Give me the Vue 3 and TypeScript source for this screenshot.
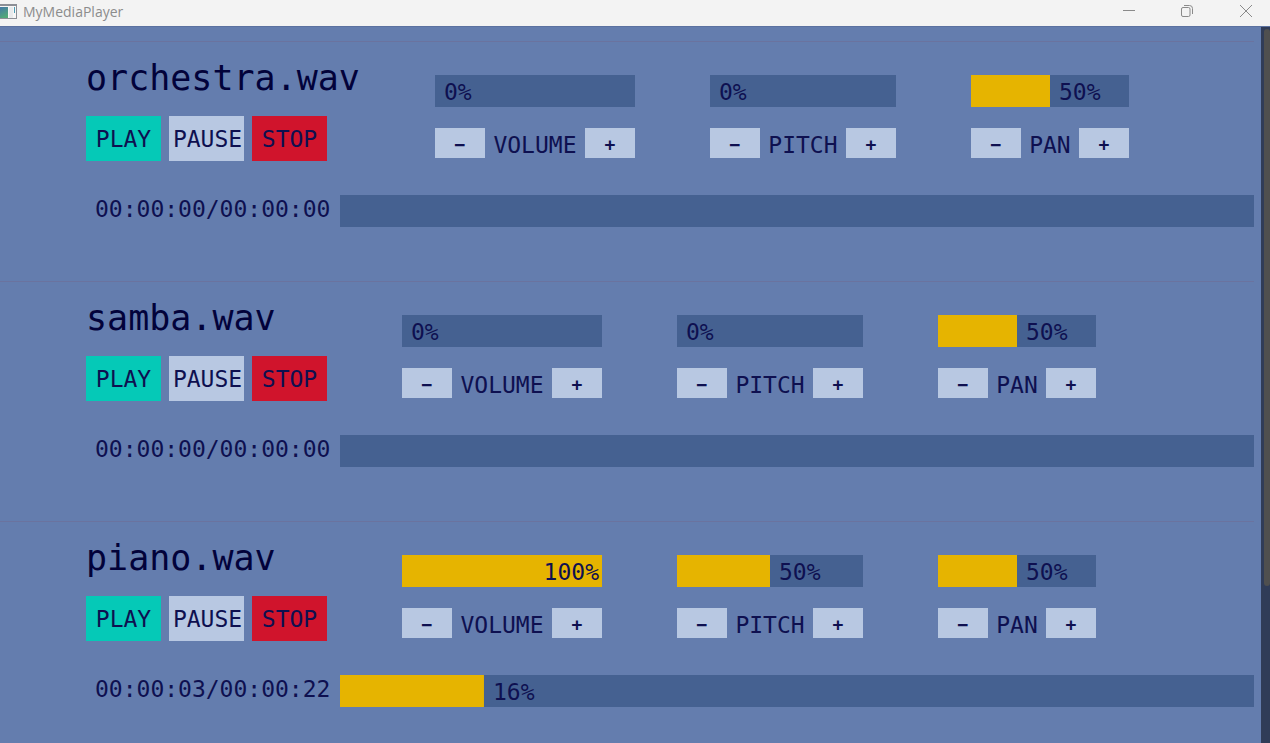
<script setup lang="ts">
import { reactive } from 'vue'

type ControlName = 'volume' | 'pitch' | 'pan'

interface Track {
  file: string
  position: string
  length: string
  progress: number
  levels: Record<ControlName, number>
}

const controls: ControlName[] = ['volume', 'pitch', 'pan']

const tracks = reactive<Track[]>([
  { file: 'orchestra.wav', position: '00:00:00', length: '00:00:00', progress: 0, levels: { volume: 0, pitch: 0, pan: 50 } },
  { file: 'samba.wav', position: '00:00:00', length: '00:00:00', progress: 0, levels: { volume: 0, pitch: 0, pan: 50 } },
  { file: 'piano.wav', position: '00:00:03', length: '00:00:22', progress: 15.75, levels: { volume: 100, pitch: 50, pan: 50 } },
])

function step(track: Track, name: ControlName, amount: number) {
  track.levels[name] = Math.min(100, Math.max(0, track.levels[name] + amount))
}
</script>

<template>
  <div class="window">
    <header class="titlebar">
      <svg class="app-icon" width="18" height="17" viewBox="0 0 18 17" aria-hidden="true">
        <defs>
          <linearGradient id="icon-fill" x1="0" y1="0" x2="0.4" y2="1">
            <stop offset="0" stop-color="#4478a8" />
            <stop offset="1" stop-color="#50a878" />
          </linearGradient>
        </defs>
        <rect x="-1" y="1" width="18" height="15" fill="#8c8f96" />
        <rect x="0" y="3" width="16" height="12" fill="#f6f6f6" />
        <rect x="0" y="4" width="8" height="11" fill="url(#icon-fill)" />
        <rect x="9" y="4" width="4" height="11" fill="#e8eaec" />
        <rect x="14" y="4" width="1" height="6" fill="#4c9cb4" />
      </svg>
      <span class="app-name">MyMediaPlayer</span>
      <div class="window-buttons">
        <button type="button" aria-label="Minimize">
          <svg width="14" height="14" viewBox="0 0 14 14"><path d="M1 6.5H13" /></svg>
        </button>
        <button type="button" aria-label="Restore">
          <svg width="14" height="14" viewBox="0 0 14 14">
            <rect x="1.5" y="3.5" width="8.5" height="9" rx="1.5" />
            <path d="M4 1.5H9.5Q12.500 1.500 12.500 4.500V10" />
          </svg>
        </button>
        <button type="button" aria-label="Close">
          <svg width="14" height="14" viewBox="0 0 14 14"><path d="M1 1L13 13M13 1L1 13" /></svg>
        </button>
      </div>
    </header>

    <div class="body">
      <main class="tracks">
        <section v-for="track in tracks" :key="track.file" class="track">
          <div class="top">
            <div class="transport">
              <h2>{{ track.file }}</h2>
              <div class="buttons">
                <button type="button" class="play">PLAY</button>
                <button type="button" class="pause">PAUSE</button>
                <button type="button" class="stop">STOP</button>
              </div>
            </div>
            <div v-for="name in controls" :key="name" class="control" :class="name">
              <div class="bar" role="progressbar" :aria-label="name" :aria-valuenow="track.levels[name]" :style="{ '--level': track.levels[name] + '%' }">
                <div class="spacer"></div>
                <span class="value">{{ track.levels[name] }}%</span>
              </div>
              <div class="stepper">
                <button type="button" :aria-label="name + ' down'" @click="step(track, name, -10)">−</button>
                <span class="label">{{ name.toUpperCase() }}</span>
                <button type="button" :aria-label="name + ' up'" @click="step(track, name, 10)">+</button>
              </div>
            </div>
          </div>
          <div class="timeline">
            <span class="time">{{ track.position }}/{{ track.length }}</span>
            <div class="bar" role="progressbar" aria-label="position" :aria-valuenow="track.progress" :style="{ '--level': track.progress + '%' }">
              <div class="spacer"></div>
              <span v-if="track.progress > 0" class="value">{{ Math.round(track.progress) }}%</span>
            </div>
          </div>
        </section>
      </main>
      <div class="scrollbar"><div class="thumb"></div></div>
    </div>
  </div>
</template>

<style>
body {
  margin: 0;
}
</style>

<style scoped>
.window {
  display: flex;
  flex-direction: column;
  height: 100vh;
  overflow: hidden;
  background: #647dae;
  color: #0e1050;
  font: 23px/30px "DejaVu Sans Mono", monospace;
}

button {
  box-sizing: border-box;
  margin: 0;
  padding: 0;
  border: 0;
  color: inherit;
  font: inherit;
}

.titlebar {
  flex: none;
  display: flex;
  align-items: center;
  height: 26px;
  background: #f3f3f3;
  color: #8c8c8c;
  font: 14px/24px "Open Sans", "Noto Sans", sans-serif;
}

.app-icon {
  margin-bottom: 4px;
}

.app-name {
  flex: 1;
  padding: 0 0 2px 5px;
}

.window-buttons {
  display: flex;
  padding-bottom: 4px;
}

.window-buttons button {
  display: flex;
  align-items: center;
  justify-content: center;
  width: 58px;
  height: 22px;
  background: none;
}

.window-buttons button:last-child {
  width: 48px;
  margin-left: 6px;
}

.window-buttons svg {
  fill: none;
  stroke: #8a8a8a;
}

.body {
  flex: 1;
  display: flex;
  min-height: 0;
  box-sizing: border-box;
  border-top: 1px solid #5b71a0;
}

.tracks {
  flex: 1;
  min-width: 0;
  overflow: hidden;
  padding: 14px 7px 0 0;
}

.track {
  box-sizing: border-box;
  height: 240px;
  border-top: 1px solid #6a739f;
  padding: 16px 0 0 86px;
}

.top {
  display: flex;
  gap: 75px;
}

.transport {
  min-width: 241px;
}

h2 {
  margin: 0 0 18px;
  color: #02023a;
  font-size: 35px;
  font-weight: 400;
  line-height: 40px;
}

.buttons {
  display: flex;
  gap: 8px;
}

.buttons button {
  width: 75px;
  height: 45px;
  padding-top: 1px;
}

.play {
  background: #05c9b7;
}

.buttons .pause {
  background: #b8c8e2;
  padding-left: 2px;
}

.stop {
  background: #d0142c;
}

.control {
  flex: none;
  padding-top: 17px;
}

.volume {
  width: 200px;
}

.pitch {
  width: 186px;
}

.pan {
  width: 158px;
}

.bar {
  display: flex;
  height: 32px;
  background: linear-gradient(#e6b400, #e6b400) 0 0 / var(--level) 100% no-repeat #456191;
}

/* Pushes the value to the end of the filled part, and gives way when the bar is full. */
.spacer {
  flex: 0 1 var(--level);
  min-width: 0;
}

.value {
  flex: none;
  box-sizing: border-box;
  padding: 2px 3px 0 9px;
}

.stepper {
  display: flex;
  justify-content: space-between;
  margin-top: 21px;
}

.stepper button {
  width: 50px;
  height: 30px;
  padding-top: 4px;
  background: #b8c8e2;
  font-size: 18px;
  font-weight: 700;
  line-height: 26px;
}

.label {
  height: 28px;
  padding-top: 2px;
}

.timeline {
  display: flex;
  margin-top: 34px;
}

.time {
  flex: none;
  box-sizing: border-box;
  width: 254px;
  padding-left: 9px;
  line-height: 28px;
}

.timeline .bar {
  flex: 1;
}

.scrollbar {
  box-sizing: border-box;
  width: 9px;
  padding: 2px 0 0 3px;
  background: #303c58;
}

.thumb {
  height: 78%;
  border-radius: 3px;
  background: #4f4f4f;
}
</style>
